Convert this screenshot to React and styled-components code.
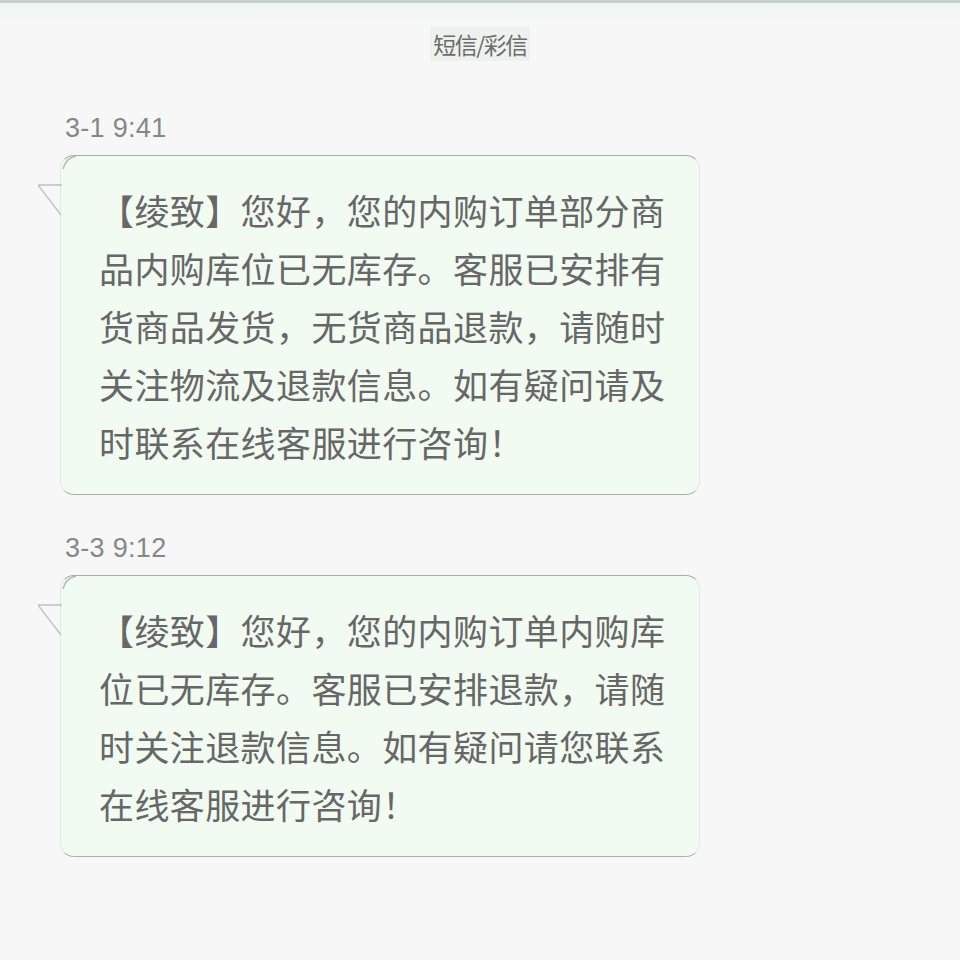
import React from 'react';
import styled, { createGlobalStyle } from 'styled-components';

const GlobalStyle = createGlobalStyle`
  html, body {
    margin: 0;
    padding: 0;
    background: #f7f7f7;
  }
  body {
    font-family: 'Noto Sans CJK SC', 'Noto Sans', sans-serif;
  }
`;

const Screen = styled.div`
  width: 960px;
  height: 960px;
  box-sizing: border-box;
  background: #f7f7f7;
  border-top: 3px solid #c6d0cc;
  overflow: hidden;
`;

const Header = styled.div`
  height: 110px;
  display: flex;
  align-items: flex-start;
  justify-content: center;
  padding-top: 24px;
  box-sizing: border-box;
  background: linear-gradient(#eef5f2 0px, #f7f7f7 22px);
`;

const Title = styled.div`
  font-size: 23px;
  line-height: 34px;
  color: #6a6d6b;
  letter-spacing: -1.5px;
  background: #eef2ee;
  padding: 0 3px;
`;

const Thread = styled.div`
  display: flex;
  flex-direction: column;
  padding-left: 60px;
`;

const Message = styled.div`
  display: flex;
  flex-direction: column;
  align-items: flex-start;
  margin-bottom: ${(p) => p.$gap || 0}px;
`;

const Stamp = styled.div`
  font-family: 'Liberation Sans', Arial, sans-serif;
  font-size: 27px;
  color: #858885;
  line-height: 30px;
  padding-left: 5px;
  margin-bottom: 12px;
  letter-spacing: 0.3px;
`;

const Bubble = styled.div`
  position: relative;
  width: 640px;
  box-sizing: border-box;
  padding: 25px 20px 23px 38px;
  background: #f1fbf1;
  border: 1px solid #e2e8e2;
  border-top-color: #a9ada9;
  border-bottom-color: #adb1ad;
  border-radius: 14px;
`;

const Tail = styled.svg`
  position: absolute;
  left: -25px;
  top: -1px;
  width: 42px;
  height: 64px;
  overflow: visible;
`;

const Body = styled.div`
  font-size: 35px;
  line-height: 58px;
  color: #676767;
  letter-spacing: 0.4px;
  width: 580px;
`;

function BubbleTail() {
  return (
    <Tail viewBox="0 0 42 64">
      <path d="M40 1 Q30 3 27 14" fill="none" stroke="#b3b7b3" strokeWidth="1.3" />
      <path d="M2 30 L26 30" fill="none" stroke="#b6bab6" strokeWidth="1.3" />
      <path d="M2 30 L25 60" fill="none" stroke="#c0c4c0" strokeWidth="1.3" />
    </Tail>
  );
}

const messages = [
  {
    time: '3-1 9:41',
    text:
      '【绫致】您好，您的内购订单部分商品内购库位已无库存。客服已安排有货商品发货，无货商品退款，请随时关注物流及退款信息。如有疑问请及时联系在线客服进行咨询！',
    gap: 38,
  },
  {
    time: '3-3 9:12',
    text:
      '【绫致】您好，您的内购订单内购库位已无库存。客服已安排退款，请随时关注退款信息。如有疑问请您联系在线客服进行咨询！',
  },
];

export default function App() {
  return (
    <>
      <GlobalStyle />
      <Screen>
        <Header>
          <Title>短信/彩信</Title>
        </Header>
        <Thread>
          {messages.map((m) => (
            <Message key={m.time} $gap={m.gap}>
              <Stamp>{m.time}</Stamp>
              <Bubble>
                <BubbleTail />
                <Body>{m.text}</Body>
              </Bubble>
            </Message>
          ))}
        </Thread>
      </Screen>
    </>
  );
}
